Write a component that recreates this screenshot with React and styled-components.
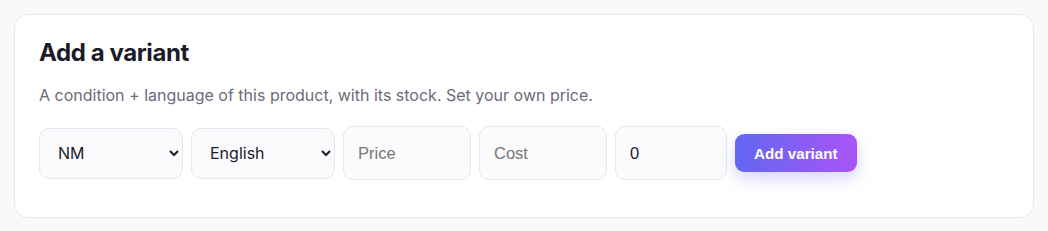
import React from "react";
import styled, { createGlobalStyle } from "styled-components";

const Global = createGlobalStyle`
  html, body { margin: 0; padding: 0; background: #f9f9fb; }
  body { font-family: Inter, "Noto Sans", sans-serif; }
  * { box-sizing: border-box; }
`;

const Page = styled.div`
  padding: 14px 14px;
`;

const Card = styled.section`
  background: #ffffff;
  border: 1px solid #e6e6ec;
  border-radius: 14px;
  padding: 24px 24px 37px;
`;

const Title = styled.h2`
  margin: 0;
  font-family: Inter, sans-serif;
  font-weight: 700;
  font-size: 24px;
  line-height: 28px;
  color: #1b1b2b;
  letter-spacing: -0.4px;
`;

const Desc = styled.p`
  margin: 16px 0 19px;
  font-family: Inter, sans-serif;
  font-size: 16px;
  line-height: 24px;
  color: #6b6b7b;
`;

const Row = styled.div`
  display: flex;
  align-items: center;
  gap: 8px;
`;

const Select = styled.select`
  width: ${(p) => p.$w}px;
  height: 51px;
  padding: 0 14px;
  border: 1px solid #e6e6ee;
  border-radius: 10px;
  background: #fbfbfe;
  color: #1b1b2b;
  font-family: Inter, sans-serif;
  font-size: 16px;
  outline: none;
`;

const Input = styled.input`
  width: ${(p) => p.$w}px;
  height: 54px;
  padding: 0 14px;
  border: 1px solid #e6e6ee;
  border-radius: 10px;
  background: #fbfbfe;
  color: #1b1b2b;
  font-family: "Liberation Sans", Arial, sans-serif;
  font-size: 16.5px;
  outline: none;
  &::placeholder { color: #767676; }
`;

const Button = styled.button`
  height: 38px;
  padding: 0 19px;
  border: none;
  border-radius: 9px;
  background: linear-gradient(90deg, #6366f1, #a855f7);
  color: #fff;
  font-family: "Liberation Sans", Arial, sans-serif;
  font-weight: 700;
  font-size: 15.2px;
  box-shadow: 0 6px 16px rgba(99, 102, 241, 0.28);
  cursor: pointer;
`;

export default function App() {
  return (
    <Page>
      <Global />
      <Card>
        <Title>Add a variant</Title>
        <Desc>A condition + language of this product, with its stock. Set your own price.</Desc>
        <Row>
          <Select $w={144} defaultValue="NM">
            <option>NM</option>
            <option>LP</option>
            <option>MP</option>
          </Select>
          <Select $w={144} defaultValue="English">
            <option>English</option>
            <option>Japanese</option>
          </Select>
          <Input $w={128} placeholder="Price" />
          <Input $w={128} placeholder="Cost" />
          <Input $w={112} defaultValue="0" />
          <Button>Add variant</Button>
        </Row>
      </Card>
    </Page>
  );
}
